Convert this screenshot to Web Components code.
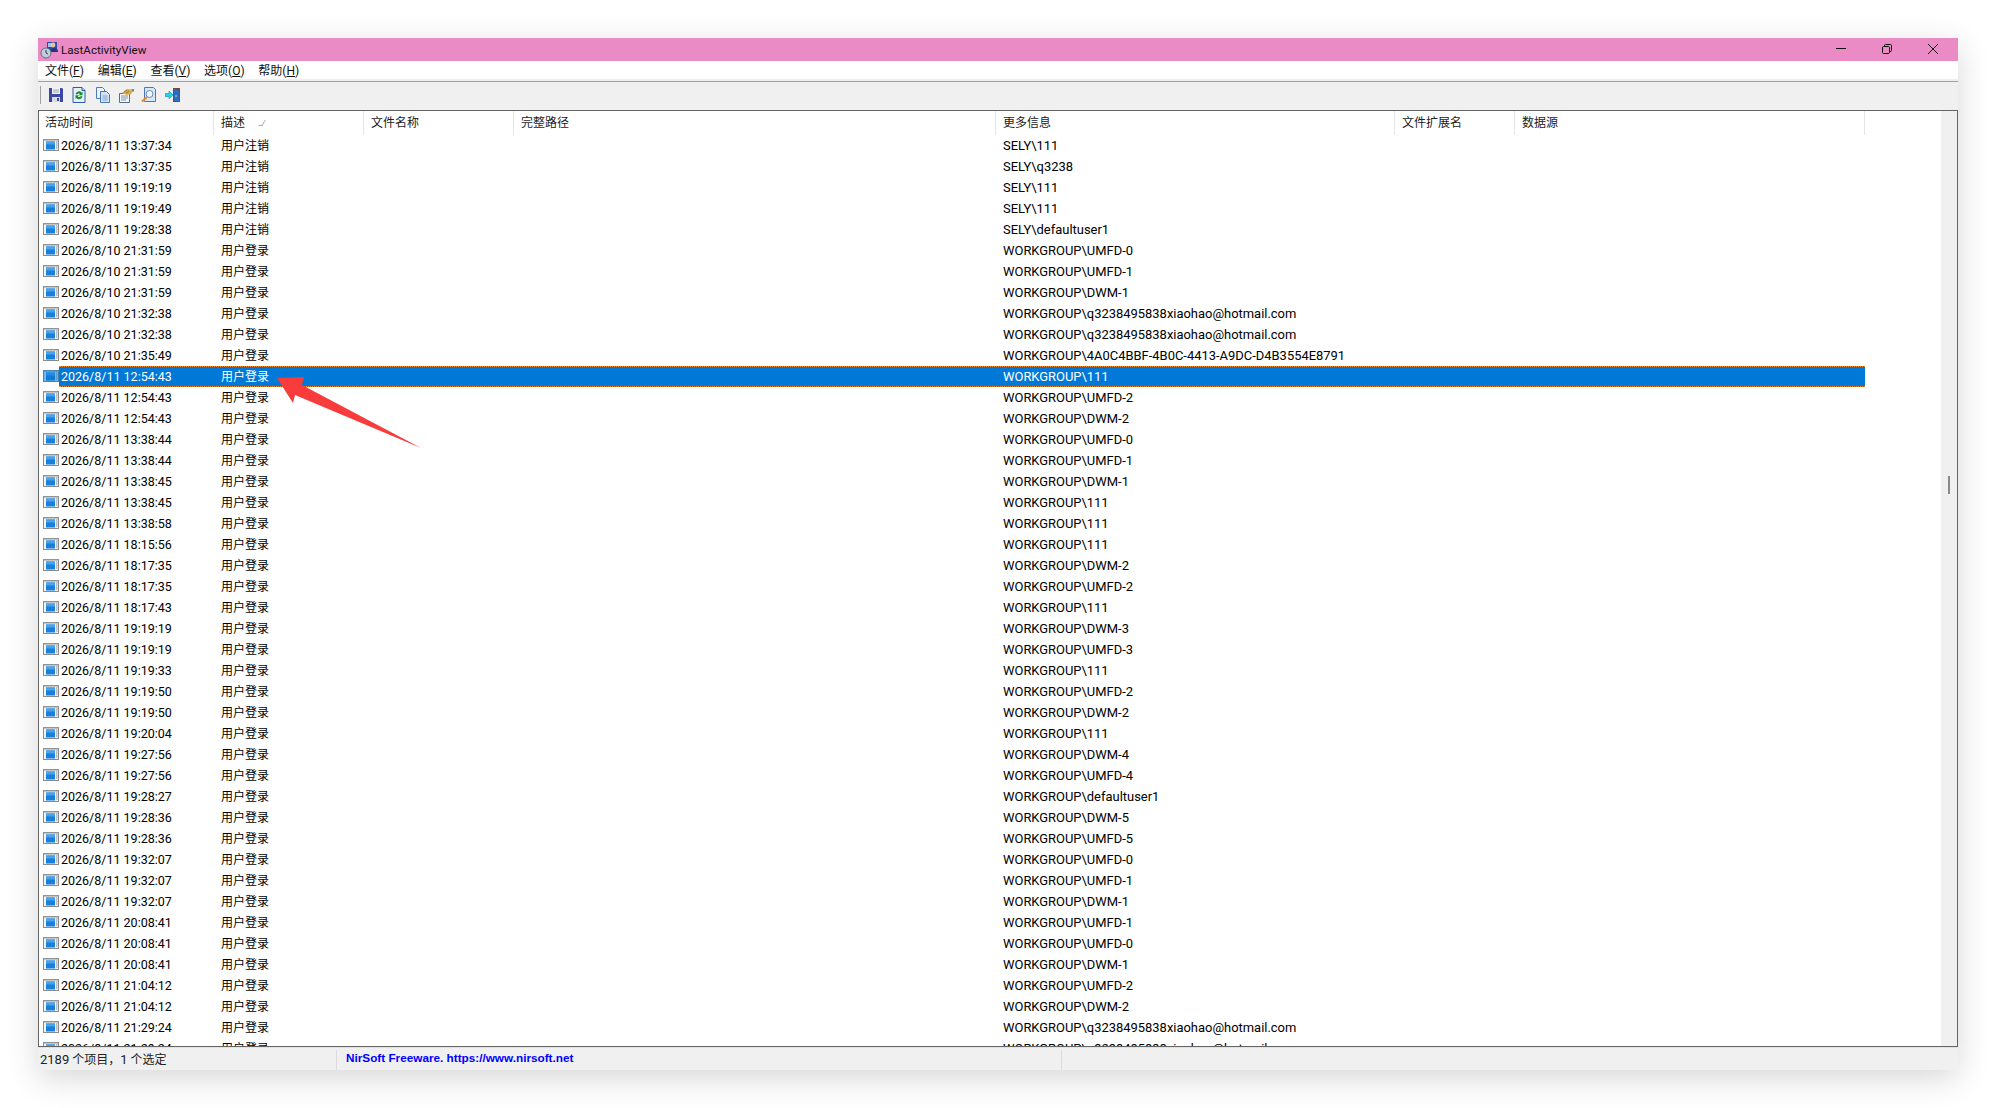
<!DOCTYPE html>
<html lang="zh-CN">
<head>
<meta charset="utf-8">
<title>LastActivityView</title>
<style>
  html, body { margin: 0; background: #fff; }
  body { padding: 38px; font: 12px Roboto, "Noto Sans CJK SC", sans-serif; color: #000; }
</style>
</head>
<body>
<app-window>
  <title-bar>LastActivityView</title-bar>
  <menu-bar>
    <menu-item>文件(<u>F</u>)</menu-item>
    <menu-item>编辑(<u>E</u>)</menu-item>
    <menu-item>查看(<u>V</u>)</menu-item>
    <menu-item>选项(<u>O</u>)</menu-item>
    <menu-item>帮助(<u>H</u>)</menu-item>
  </menu-bar>
  <tool-bar></tool-bar>
  <activity-list></activity-list>
  <status-bar></status-bar>
  <callout-arrow></callout-arrow>
</app-window>

<script>
/**
 * The list columns: width in pixels and header label.
 */
const COLUMNS = [
  [175, '活动时间'], [150, '描述'], [150, '文件名称'], [482, '完整路径'],
  [399, '更多信息'], [120, '文件扩展名'], [350, '数据源']
]
const GRID = COLUMNS.map((c, i) => (i === 0 ? c[0] - 20 : c[0]) + 'px').join(' ')

const OUT = '注销'
const IN = '登录'
const EMAIL = 'WORKGROUP\\q3238495838xiaohao@hotmail.com'
const w = name => 'WORKGROUP\\' + name

const ROWS = [
  ['8/11 13:37:34', OUT, 'SELY\\111'],
  ['8/11 13:37:35', OUT, 'SELY\\q3238'],
  ['8/11 19:19:19', OUT, 'SELY\\111'],
  ['8/11 19:19:49', OUT, 'SELY\\111'],
  ['8/11 19:28:38', OUT, 'SELY\\defaultuser1'],
  ['8/10 21:31:59', IN, w('UMFD-0')],
  ['8/10 21:31:59', IN, w('UMFD-1')],
  ['8/10 21:31:59', IN, w('DWM-1')],
  ['8/10 21:32:38', IN, EMAIL],
  ['8/10 21:32:38', IN, EMAIL],
  ['8/10 21:35:49', IN, w('4A0C4BBF-4B0C-4413-A9DC-D4B3554E8791')],
  ['8/11 12:54:43', IN, w('111')],
  ['8/11 12:54:43', IN, w('UMFD-2')],
  ['8/11 12:54:43', IN, w('DWM-2')],
  ['8/11 13:38:44', IN, w('UMFD-0')],
  ['8/11 13:38:44', IN, w('UMFD-1')],
  ['8/11 13:38:45', IN, w('DWM-1')],
  ['8/11 13:38:45', IN, w('111')],
  ['8/11 13:38:58', IN, w('111')],
  ['8/11 18:15:56', IN, w('111')],
  ['8/11 18:17:35', IN, w('DWM-2')],
  ['8/11 18:17:35', IN, w('UMFD-2')],
  ['8/11 18:17:43', IN, w('111')],
  ['8/11 19:19:19', IN, w('DWM-3')],
  ['8/11 19:19:19', IN, w('UMFD-3')],
  ['8/11 19:19:33', IN, w('111')],
  ['8/11 19:19:50', IN, w('UMFD-2')],
  ['8/11 19:19:50', IN, w('DWM-2')],
  ['8/11 19:20:04', IN, w('111')],
  ['8/11 19:27:56', IN, w('DWM-4')],
  ['8/11 19:27:56', IN, w('UMFD-4')],
  ['8/11 19:28:27', IN, w('defaultuser1')],
  ['8/11 19:28:36', IN, w('DWM-5')],
  ['8/11 19:28:36', IN, w('UMFD-5')],
  ['8/11 19:32:07', IN, w('UMFD-0')],
  ['8/11 19:32:07', IN, w('UMFD-1')],
  ['8/11 19:32:07', IN, w('DWM-1')],
  ['8/11 20:08:41', IN, w('UMFD-1')],
  ['8/11 20:08:41', IN, w('UMFD-0')],
  ['8/11 20:08:41', IN, w('DWM-1')],
  ['8/11 21:04:12', IN, w('UMFD-2')],
  ['8/11 21:04:12', IN, w('DWM-2')],
  ['8/11 21:29:24', IN, EMAIL],
  ['8/11 21:29:24', IN, EMAIL]
]
const SELECTED_ROW = 11

/**
 * Small helper, sets up an open shadow root with the given markup.
 */
function shadow (el, html) {
  el.attachShadow({ mode: 'open' }).innerHTML = html
}

customElements.define('app-window', class extends HTMLElement {
  constructor () {
    super()
    shadow(this, `
      <style>
        :host {
          display: flex;
          flex-direction: column;
          position: relative;
          width: 1920px;
          height: 1032px;
          background: #f0f0f0;
          box-shadow: 0 8px 30px rgba(0, 0, 0, .16);
        }
      </style>
      <slot></slot>`)
  }
})

customElements.define('title-bar', class extends HTMLElement {
  constructor () {
    super()
    shadow(this, `
      <style>
        :host {
          display: flex;
          align-items: center;
          flex: none;
          height: 23px;
          background: #eb8bc6;
          color: #111;
          font-size: 11.6px;
          padding-left: 2px;
        }
        .logo { width: 18px; height: 18px; margin-right: 3px; flex: none; }
        .text { flex: 1; }
        .btn { width: 46px; height: 23px; display: flex; align-items: center; justify-content: center; }
        .btns { display: flex; padding-right: 2px; }
        svg.g { width: 12px; height: 12px; fill: none; stroke: #111; stroke-width: 1; }
      </style>
      <svg class="logo" viewBox="0 0 18 18">
        <rect x="7" y="1" width="10" height="9" fill="#2f4aa8"/>
        <rect x="8" y="2" width="5" height="4" fill="#9cc4ee"/>
        <circle cx="13" cy="4" r="2.4" fill="#e8c49a"/>
        <path d="M10 11c0-3 2-4 4-4s4 1 4 4z" fill="#24357e"/>
        <circle cx="6" cy="12" r="5" fill="#c4cdd8" stroke="#56708c"/>
        <path d="M6 9v3l2 1" stroke="#24357e" fill="none"/>
      </svg>
      <span class="text"><slot></slot></span>
      <div class="btns">
        <div class="btn"><svg class="g" viewBox="0 0 12 12"><path d="M1 4.500h10"/></svg></div>
        <div class="btn"><svg class="g" viewBox="0 0 12 12"><rect x="1.500" y="2.500" width="7" height="7" rx="1.200"/><path d="M3.500 2.500v-1a1 1 0 0 1 1-1h5a1 1 0 0 1 1 1v5a1 1 0 0 1-1 1h-1"/></svg></div>
        <div class="btn"><svg class="g" viewBox="0 0 12 12"><path d="M1 0l10 10M11 0L1 10"/></svg></div>
      </div>`)
  }
})

customElements.define('menu-bar', class extends HTMLElement {
  constructor () {
    super()
    shadow(this, `
      <style>
        :host {
          display: flex;
          flex: none;
          box-sizing: border-box;
          height: 20px;
          padding-left: 7px;
          background: linear-gradient(#fff 18px, #f0f0f0 18px);
          align-items: center;
        }
      </style>
      <slot></slot>`)
  }
})

customElements.define('menu-item', class extends HTMLElement {
  constructor () {
    super()
    shadow(this, `
      <style>
        :host { display: block; margin-right: 13.7px; white-space: nowrap; color: #111; line-height: 18px; }
      </style>
      <slot></slot>`)
  }
})

customElements.define('tool-bar', class extends HTMLElement {
  constructor () {
    super()
    shadow(this, `
      <style>
        :host {
          display: flex;
          flex: none;
          box-sizing: border-box;
          height: 29px;
          border-top: 1px solid #a0a0a0;
          align-items: center;
          gap: 7.33px;
          padding: 0 0 3px 2px;
        }
        .grip { width: 1px; height: 18px; background: #a0a0a0; margin-right: -.33px; }
        svg { width: 16px; height: 16px; flex: none; }
      </style>
      <div class="grip"></div>
      <svg viewBox="0 0 16 16"><path d="M1 1h13l1 1v13H1z" fill="#3b47a0"/><rect x="4" y="1" width="8" height="6" fill="#f4f4f4"/><path d="M5 3h6M5 5h6" stroke="#9aa0b8"/><rect x="4" y="10" width="8" height="5" fill="#d8dae4"/><rect x="9" y="11" width="2" height="3" fill="#3b47a0"/></svg>
      <svg viewBox="0 0 16 16"><path d="M2 .5h9l3 3v12H2z" fill="#e6eefa" stroke="#2f5aa8"/><path d="M11 .5v3h3" fill="#b8cdea" stroke="#2f5aa8"/><path d="M4.500 7a3.500 3.500 0 0 1 6-1.500l1-1v3.800H7.800L9.200 7A1.800 1.800 0 0 0 6.200 7.500z" fill="#14902c"/><path d="M11.500 9.500a3.500 3.500 0 0 1-6 1.500l-1 1V8.200h3.700L6.800 9.500a1.800 1.800 0 0 0 3-.500z" fill="#14902c"/></svg>
      <svg viewBox="0 0 16 16"><path d="M1.500.5h6l2 2v9h-8z" fill="#eef3fb" stroke="#4a78b8"/><path d="M5.500 4.500h6l3 3v8h-9z" fill="#d4e3f6" stroke="#4a78b8"/><path d="M7.500 9h5M7.500 11h5M7.500 13h5" stroke="#7fa4d4"/></svg>
      <svg viewBox="0 0 16 16"><path d="M1.500 6.500h10v9h-10z" fill="#f4f6fa" stroke="#56708c"/><path d="M3 9h7M3 11h7M3 13h5" stroke="#7f93aa"/><path d="M4 6l5-4 4 .5 2.500 1L13 7 9 8z" fill="#dcaa4a"/><path d="M6 5l3-2M8 6l3-2" stroke="#a67c28"/><path d="M13 2.500l3-.5v3z" fill="#5a8c4a"/></svg>
      <svg viewBox="0 0 16 16"><path d="M3.500.5h9l2 2v12h-11z" fill="#d8e6f8" stroke="#4a78b8"/><circle cx="8.500" cy="7" r="3.500" fill="#eef6fe" stroke="#6a8cb4"/><path d="M6 10l-5 4.500" stroke="#e08a30" stroke-width="2.200"/></svg>
      <svg viewBox="0 0 16 16"><path d="M8 1h7v14H8z" fill="#7a4a2a"/><path d="M9 2l5 1.500V15l-5-1.500z" fill="#2a6cc8"/><rect x="10.500" y="8" width="1" height="2" fill="#e8d060"/><path d="M0 6.500h4V4l4 4-4 4V9.500H0z" fill="#18d8f0" stroke="#0c7c98" stroke-width=".5"/></svg>`)
  }
})

customElements.define('list-row', class extends HTMLElement {
  // attributes are set after createElement, so render here and not in the constructor
  connectedCallback () {
    if (this.shadowRoot) return
    shadow(this, `
      <style>
        :host { display: flex; flex: none; height: 21px; font-size: 12px; white-space: nowrap; }
        .ico { width: 16px; height: 12px; margin: 4px 0 0 4px; flex: none; }
        .cells { display: grid; grid-template-columns: ${GRID}; box-sizing: border-box; height: 21px; line-height: 19px; border: solid transparent; border-width: 1px 0; }
        .cells > span { padding-left: 7px; overflow: hidden; }
        .cells > .time { padding-left: 2px; font-size: 12.5px; }
        .cells > .desc { line-height: 20px; }
        .cells > .info { font-size: 12.95px; }
        .tint { display: none; }
        :host([selected]) .tint { display: inline; }
        :host([selected]) .cells { background: #0078d7; color: #fff; border-color: #f08a30; border-style: dotted; }
      </style>
      <svg class="ico" viewBox="0 0 16 12">
        <rect x=".5" y=".5" width="15" height="11" fill="#f4f4f4" stroke="#8a8a8a"/>
        <rect x="0" y="0" width="16" height="1.500" fill="#949494"/>
        <rect x="3" y="2.500" width="9" height="8" fill="#1680dc"/>
        <rect x="3" y="2.500" width="9" height="3" fill="#4aa2ea"/>
        <path d="M13 3h1.500M13 5h1.500M13 7h1.500M13 9h1.500" stroke="#8a8a8a"/>
        <rect class="tint" width="16" height="12" fill="#0078d7" opacity=".5"/>
      </svg>
      <div class="cells">
        <span class="time">${this.getAttribute('time')}</span>
        <span class="desc">${this.getAttribute('desc')}</span>
        <span></span>
        <span></span>
        <span class="info">${this.getAttribute('info')}</span>
        <span></span>
        <span></span>
      </div>`)
  }
})

customElements.define('activity-list', class extends HTMLElement {
  constructor () {
    super()
    const heads = COLUMNS.map(c => `<div class="head" style="width:${c[0]}px">${c[1]}</div>`).join('')
    shadow(this, `
      <style>
        :host {
          display: flex;
          flex: none;
          box-sizing: border-box;
          height: 937px;
          background: #fff;
          border: 1px solid #646464;
          overflow: hidden;
        }
        .main { flex: 1; display: flex; flex-direction: column; overflow: hidden; }
        .header { display: flex; flex: none; height: 24px; }
        .head { box-sizing: border-box; flex: none; padding-left: 7px; line-height: 24px; color: #222; border-right: 1px solid #e5e5e5; }
        .head:first-child { padding-left: 6px; }
        .rows { flex: 1; display: flex; flex-direction: column; overflow: hidden; }
        .sort { display: inline-block; width: 3px; height: 5px; margin: 0 0 1px 15px; border-right: 1px solid #aaa; border-bottom: 1px solid #aaa; transform: skewX(-30deg); }
        .scroll { flex: none; width: 16px; background: #f0f0f0; padding-top: 365px; box-sizing: border-box; }
        .thumb { width: 2px; height: 18px; margin-left: 7px; background: #8a8a8a; }
      </style>
      <div class="main">
        <div class="header">${heads}</div>
        <div class="rows"></div>
      </div>
      <div class="scroll"><div class="thumb"></div></div>`)

    // 描述 is the sorted column
    const sorted = this.shadowRoot.querySelectorAll('.head')[1]
    sorted.insertAdjacentHTML('beforeend', '<span class="sort"></span>')

    const rows = this.shadowRoot.querySelector('.rows')
    ROWS.forEach((row, i) => {
      const el = document.createElement('list-row')
      el.setAttribute('time', '2026/' + row[0])
      el.setAttribute('desc', '用户' + row[1])
      el.setAttribute('info', row[2])
      if (i === SELECTED_ROW) el.setAttribute('selected', '')
      rows.appendChild(el)
    })
  }
})

customElements.define('status-bar', class extends HTMLElement {
  constructor () {
    super()
    shadow(this, `
      <style>
        :host {
          display: flex;
          flex: 1;
          box-sizing: border-box;
          border-top: 1px solid #e2e2e2;
          padding-top: 2px;
          align-items: stretch;
          font-size: 12px;
          color: #222;
        }
        .p1 { width: 299px; box-sizing: border-box; padding-left: 2px; line-height: 19px; border-right: 1px solid #dcdcdc; }
        .p1 b { font-weight: normal; font-size: 13px; }
        .p2 { width: 725px; box-sizing: border-box; padding-left: 9px; border-right: 1px solid #dcdcdc; font: bold 11.75px/16px "Liberation Sans", sans-serif; color: #0000ff; }
      </style>
      <div class="p1"><b>2189</b> 个项目，<b>1</b> 个选定</div>
      <div class="p2">NirSoft Freeware. https://www.nirsoft.net</div>`)
  }
})

customElements.define('callout-arrow', class extends HTMLElement {
  constructor () {
    super()
    shadow(this, `
      <style>
        :host { position: absolute; left: 239px; top: 339px; width: 144px; height: 71px; pointer-events: none; }
        svg { display: block; }
      </style>
      <svg width="144" height="71" viewBox="0 0 144 71">
        <polygon points="0,1 27,0 25,8 144,71 18,18 16,26" fill="#f83c3c"/>
      </svg>`)
  }
})
</script>
</body>
</html>
